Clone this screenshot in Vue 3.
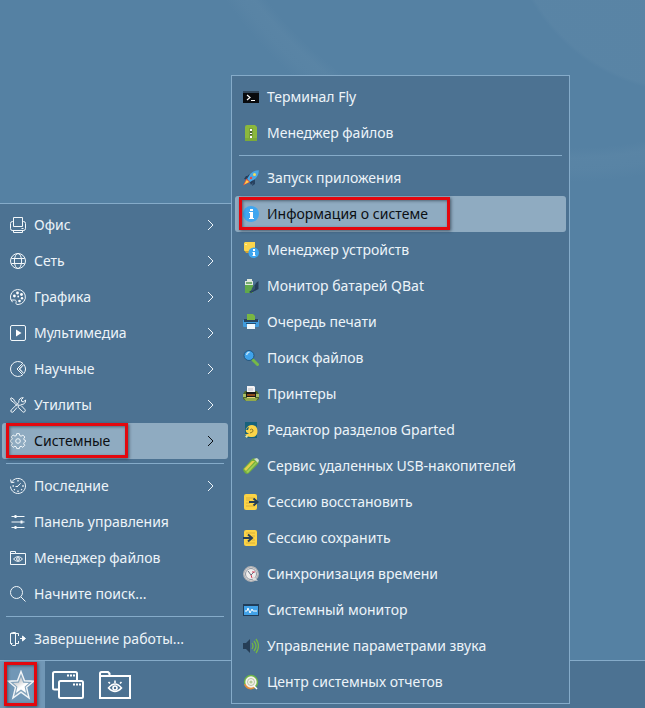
<script setup>
import { ref } from 'vue'

const activeCategory = ref('system')
const activeApp = ref('info')

const categoryGroups = [
  [
    { id: 'office', label: 'Офис', sub: true },
    { id: 'network', label: 'Сеть', sub: true },
    { id: 'graphics', label: 'Графика', sub: true },
    { id: 'media', label: 'Мультимедиа', sub: true },
    { id: 'science', label: 'Научные', sub: true },
    { id: 'utils', label: 'Утилиты', sub: true },
    { id: 'system', label: 'Системные', sub: true, marked: true }
  ],
  [
    { id: 'recent', label: 'Последние', sub: true },
    { id: 'control', label: 'Панель управления' },
    { id: 'folder', label: 'Менеджер файлов' },
    { id: 'search', label: 'Начните поиск...' }
  ],
  [{ id: 'exit', label: 'Завершение работы...' }]
]

const appGroups = [
  [
    { id: 'terminal', label: 'Терминал Fly' },
    { id: 'files', label: 'Менеджер файлов' }
  ],
  [
    { id: 'rocket', label: 'Запуск приложения' },
    { id: 'info', label: 'Информация о системе', marked: true },
    { id: 'devices', label: 'Менеджер устройств' },
    { id: 'battery', label: 'Монитор батарей QBat' },
    { id: 'queue', label: 'Очередь печати' },
    { id: 'find', label: 'Поиск файлов' },
    { id: 'printers', label: 'Принтеры' },
    { id: 'gparted', label: 'Редактор разделов Gparted' },
    { id: 'usb', label: 'Сервис удаленных USB-накопителей' },
    { id: 'restore', label: 'Сессию восстановить' },
    { id: 'save', label: 'Сессию сохранить' },
    { id: 'time', label: 'Синхронизация времени' },
    { id: 'monitor', label: 'Системный монитор' },
    { id: 'sound', label: 'Управление параметрами звука' },
    { id: 'reports', label: 'Центр системных отчетов' }
  ]
]

// line icons, 16x16, drawn with a white stroke
const lineIcons = {
  office: '<path d="M3.5 9.500v-9h9v9zM3.5 4.500h-1a2 2 0 0 0-2 2v5a2 2 0 0 0 2 2h1M12.500 4.500h1a2 2 0 0 1 2 2v5a2 2 0 0 1-2 2h-1M3.500 13.500v2h9v-2M2.500 13.500h11M11.500 11.500h2"/>',
  network: '<circle cx="8" cy="8" r="7.5"/><ellipse cx="8" cy="8" rx="3.6" ry="7.5"/><path d="M1.3 5.5h13.4M1.3 10.5h13.4"/>',
  graphics: '<path d="M2.5 13.2A7.5 7.5 0 1 1 8 15.5c-2 0-2.5-1-1.9-2.3.5-1.2-.2-2.2-1.6-2.2-2.3 0-3.3.3-3.8-.5"/><g fill="#fff" stroke="none"><circle cx="4.4" cy="7" r="1.4"/><circle cx="7.5" cy="4" r="1.4"/><circle cx="11.5" cy="5.5" r="1.4"/><circle cx="12" cy="9.2" r="1.2"/><circle cx="9.5" cy="12" r="1.3"/><circle cx="8.2" cy="7.5" r=".9"/></g>',
  media: '<rect x=".5" y=".5" width="15" height="15" rx="1.5"/><path d="M6 4.5v7L11.5 8z" fill="#fff" stroke="none"/>',
  science: '<path d="M12.8 2.2A7.5 7.5 0 1 0 12.8 13.8L7 8zM13.8 3.5a7.3 7.3 0 0 1 0 9L9.3 8zM12 5.5 9.5 8l2.5 2.5"/>',
  utils: '<path d="M1 .8 3.5 2l1 2L8.6 8.1 7.5 9.2 3.4 5 1.5 4 .5 1.5zM9 8.5c.8-.5 1.7-.4 2.3.2l3.5 3.7c1.5 1.5-.8 3.8-2.3 2.3L8.9 11c-.6-.6-.6-1.5 0-2.5zM1.2 13 8.8 5.6c-.4-2.9 1.4-5.2 4.5-4.9l-2 2 .5 1.8 1.7.4 2-2c.4 3.1-1.8 5-4.7 4.5M7 10.5 3.2 14.9c-1.4 1.3-3.2-.6-2-1.9"/>',
  system: '<path d="M6.7.6h2.6l.5 2 1.3.6 1.8-1.1 1.9 1.9-1.1 1.8.6 1.3 1.2.3v1.3l-1.2.6-.6 1.4 1 1.7-1.9 1.9-1.7-1.1-1.3.6-.5 1.8H6.7l-.5-1.8-1.3-.6-1.7 1.1-1.9-1.9 1-1.7-.6-1.4-1.2-.4V7.3l1.2-.5.6-1.3-1-1.6 1.9-1.9 1.7 1.1 1.3-.5z"/><circle cx="8" cy="8" r="2.3"/>',
  recent: '<path d="M1.5 4.2A7.5 7.5 0 1 1 .5 8.5M.6 1.5l.6 3.2 3.2-.5M7 8.8l3.7-3.5M5.5 8.5H8"/><path d="M8 2v1.600M8 12.400V14M2.500 8h1.400M12.200 8h1.600M4 12l.8-.8M12 12l-.8-.8" stroke-width="1.4"/>',
  control: '<path d="M1.500 2.500h13M1.500 8h13M1.500 13.500h13"/><path d="M5.500 1v3M11.500 6.500v3M5.500 12v3" stroke-width="2"/>',
  folder: '<path d="M.5 14.500V1.500h5v2h10v11zM.5 3.500h5"/><path d="M3.500 9q4.500-4.800 9 0-4.500 4.800-9 0z"/><circle cx="8" cy="9" r="1.400"/>',
  search: '<circle cx="6.500" cy="6.500" r="6"/><path d="m11 11 4.500 4.500"/>',
  exit: '<path d="M8.500 5V2.500h-8v10h2M8.500 10v2.500H5.500M.5 2.500l2-1h3v13h-3l-2-2M10 7.500h4"/><path d="M12.500 5v5L15.500 7.500z" fill="#fff"/>'
}

// full-colour application icons, 16x16
const appIcons = {
  terminal: '<path fill="#31465a" d="M0 2h16v4H0z"/><path fill="#080a0d" d="M0 4h16v10H0z"/><path d="m4 6 3 2.5L4 11M8 11.5h4" fill="none" stroke="#fff" stroke-width="1.2"/>',
  files: '<path d="M2 2q0-2 2-2h8l2 2v14H2z" fill="#8bb83d"/><path d="M2 13h12v3H2z" fill="#7caa38"/><path d="M6 3h4v10H6z" fill="#78a038"/><path d="M7 4h2v2H7zM7 8h2v1H7zM7 11h2v2H7z" fill="#fff"/><path d="M7 6h2v2H7zM7 9h2v1H7z" fill="#49602f"/>',
  rocket: '<path d="m3 6 4 0 4 5-3 4-2-5-5-1z" fill="#263c59"/><path d="m10 11 2-2v5l-3 2zM5 5l3-1-1 4-4 1z" fill="#284362"/><path d="M15.8.2Q11 .1 7.2 4L4 9l3 3 5-3q4-4 3.8-8.8z" fill="#4ba6e4"/><path d="m3.5 8.5-3.5 7 7-3.5z" fill="#f1533c"/><path d="m3.7 10-2.5 4.5L6 12z" fill="#ffd447"/><circle cx="11.5" cy="4.5" r="1.5" fill="#f6dc58"/><circle cx="8" cy="8" r="1.2" fill="#ed463c"/>',
  info: '<circle cx="8" cy="8" r="8" fill="#3fa6ef"/><path d="M7 3h3v2H7zM6 6h4v6h1v1H6v-1h1V7H6z" fill="#fff"/>',
  devices: '<path d="M2 0h10v10H3.5L1 8.5V1z" fill="#fbd54c"/><path d="M2 2h2v1H2z" fill="#fff0a0"/><path d="M2 9h5v2H3z" fill="#d5a22f"/><circle cx="10.7" cy="10.7" r="5.3" fill="#3da5ef"/><path d="M10 7h2v2h-2zM9.5 10H12v3h.5v1h-3v-1h.5v-2h-.5z" fill="#fff"/>',
  battery: '<path d="M4 1h5v2h1v12H2V3h2z" fill="#dfe9dd"/><path d="M2 7h8v8H2z" fill="#60a94a"/><path d="M3 4h6v2H3z" fill="#79ad72"/><path d="M15.500 3v8L8 15l-2-1 4-3 3-6z" fill="#263e59"/><path d="M12 6v5l-4 3 1-4z" fill="#34556f"/>',
  queue: '<path d="M4 0h6l2 2v4H4z" fill="#79b743"/><path d="M0 6h16v6q0 1-1 1H1q-1 0-1-1z" fill="#3f9bdd"/><path d="M1 5h14v3H1z" fill="#27445f"/><path d="M4 5h8v1H4z" fill="#79b743"/><path d="M4 10h8v5H4z" fill="#edf6fb"/><path d="M3 9h10v1H3z" fill="#1f4f77"/>',
  find: '<path d="m9.5 9.5 5 5" stroke="#76b947" stroke-width="3" fill="none" stroke-linecap="round"/><circle cx="6" cy="5.5" r="5" fill="#3fa3eb" stroke="#24577f"/><path d="M3.5 5q.5-2.500 3-3" stroke="#c2e6fc" stroke-width="1.4" fill="none"/>',
  printers: '<path d="M2 5h12l2 3v5l-3 2H3l-3-2V8z" fill="#50682c"/><path d="M4 0h7l1 1v6H4z" fill="#f3f2f3"/><path d="M5 2h5v3H5z" fill="#d8d8dd"/><path d="M0 8h3v3H0zM13 8h3v3h-3z" fill="#a8bf67"/><path d="M3 6h10v5H3z" fill="#17191a"/><path d="M4 8h8v2H4z" fill="#8d4b1b"/><path d="M4 11h8v1H4z" fill="#e6d477"/><path d="M1 12h14l-2 3H3z" fill="#91a94b"/>',
  gparted: '<path d="M2 0h12v16H2z" fill="#17617c"/><path d="M3 7q2-4 6-4 5 0 5.500 6 0 6-5.500 6-5 .500-7-3 3 .500 4-1Q2 11 3 7z" fill="#fbd449"/><path d="M7 8q2-2 3 0t-3 3" fill="none" stroke="#8e7a24"/><path d="M3 8q1-3 3-3L5 8z" fill="#17617c"/><circle cx="3.500" cy="14.500" r="1.200" fill="#efe6a4"/>',
  usb: '<path d="M0 11 9 1q3-2 5.5 1Q17 4 14 7l-8 8q-2 2-4 0t-2-4z" fill="#73ad3d"/><path d="m1 11 8-8 3 0-9 10z" fill="#e2cf4b"/><path d="m11 1 3-1 2 2-1 3z" fill="#d2dfcc"/><path d="m3 14 10-10 1 1L5 15z" fill="#9ece57"/>',
  restore: '<rect x="1" y="0" width="13" height="16" rx="2" fill="#fbd345"/><path d="M3 4h8M3 6h4M3 9h4M3 12h8" stroke="#dbb03a"/><path d="M6 8h8M10.5 4.500 14.500 8l-4 3.500" stroke="#263e56" stroke-width="2" fill="none"/>',
  save: '<rect x="1" y="0" width="13" height="16" rx="2" fill="#fbd345"/><path d="M3 3h9M9 6h3M9 10h3M3 13h9" stroke="#dbb03a"/><path d="M0 8h8M5 4.500 9 8l-4 3.500" stroke="#263e56" stroke-width="2" fill="none"/>',
  time: '<circle cx="8" cy="8" r="7.2" fill="#eee" stroke="#b3b3b5" stroke-width="1.5"/><circle cx="8" cy="8" r="5.5" fill="none" stroke="#8d949d"/><path d="m5 5 3 4 3-3" stroke="#66717f" fill="none"/><path d="M9 6h3M8 9l1 3" stroke="#d23952"/><path d="m10 10 5 5-5-1z" fill="#ddd"/>',
  monitor: '<path d="M0 2h16v12H0z" fill="#203d5a"/><path d="M1 4h14v9H1z" fill="#42a2e8"/><path d="M2 9h2l1-3 2 5 2-4 1 2h4" stroke="#fff" fill="none"/>',
  sound: '<path d="M0 5h3l4-4v14l-4-4H0z" fill="#263e56"/><path d="M9 5q2 3 0 6M11 3q4 5 0 10M13 1q5 7 0 14" stroke="#72b545" stroke-width="1.3" fill="none"/>',
  reports: '<circle cx="8" cy="8" r="7.2" fill="#6db447"/><path d="M1 10a7 7 0 0 0 11 4l-2-3z" fill="#e38c3c"/><circle cx="8" cy="8" r="5.7" fill="#f7f3ec"/><circle cx="8" cy="8" r="3.5" fill="none" stroke="#b5bfa6"/><circle cx="8" cy="8" r="1.6" fill="#b4c995"/><path d="m11 12 3 3" stroke="#fff" stroke-width="1.5"/>'
}
</script>

<template>
  <div class="desktop">
    <main class="wallpaper"></main>

    <div class="menus">
      <nav class="menu start-menu" aria-label="Меню">
        <div v-for="(group, i) in categoryGroups" :key="i" class="group">
          <button
            v-for="item in group"
            :key="item.id"
            class="item"
            :class="{ selected: item.id === activeCategory, marked: item.marked }"
            @click="activeCategory = item.id"
          >
            <svg class="icon line" viewBox="0 0 16 16" v-html="lineIcons[item.id]"></svg>
            <span class="label">{{ item.label }}</span>
            <svg v-if="item.sub" class="chevron" viewBox="0 0 7 12">
              <path d="M1 1 6 6 1 11" />
            </svg>
          </button>
        </div>
      </nav>

      <nav class="menu sub-menu" aria-label="Системные">
        <div v-for="(group, i) in appGroups" :key="i" class="group">
          <button
            v-for="item in group"
            :key="item.id"
            class="item"
            :class="{ selected: item.id === activeApp, marked: item.marked }"
            @click="activeApp = item.id"
          >
            <svg class="icon" viewBox="0 0 16 16" v-html="appIcons[item.id]"></svg>
            <span class="label">{{ item.label }}</span>
          </button>
        </div>
      </nav>
    </div>

    <footer class="taskbar">
      <button class="start-btn" aria-label="Пуск">
        <svg class="star" viewBox="0 0 28 30">
          <defs>
            <linearGradient id="star-fill" x1="0" y1="0" x2="0.6" y2="1">
              <stop offset="0.4" stop-color="#d5d7d9" />
              <stop offset="0.7" stop-color="#fff" />
            </linearGradient>
          </defs>
          <path
            d="m14 1.500 3.500 9.300 9.300.4-7.300 6 2.600 10.800-8.100-5.800L5.900 28l2.600-10.800-7.300-6 9.300-.4z"
            fill="#85a4bc"
            stroke="#f2f5f7"
            stroke-width="1.400"
          />
          <path d="m14 7 2.200 5.700 5.600.4-4.200 3.600 1.500 6.200-5.100-3.500-5.100 3.500 1.500-6.200-4.200-3.600 5.600-.4z" fill="url(#star-fill)" />
        </svg>
      </button>
      <button class="task-btn" aria-label="Окна">
        <svg class="task-icon" viewBox="0 0 32 28">
          <path d="M7 18.500H2.500Q1 18.500 1 17V2.500Q1 1 2.500 1h21Q25 1 25 2.500V9" />
          <rect x="7" y="10" width="24" height="17" rx="1.500" />
          <path d="M15 4.500h2M18 4.500h2M21 4.500h2M21 13.500h2M24 13.500h2M27 13.500h2" />
        </svg>
      </button>
      <button class="task-btn" aria-label="Файлы">
        <svg class="task-icon" viewBox="0 0 32 28">
          <path d="M1 5V2.500Q1 1 2.500 1H9l1.500 1.500V5H31v22H1V5h9" />
          <path d="M9.500 17q6.500-8 13 0-6.500 7-13 0z" stroke-width="1.600" />
          <circle cx="16" cy="17" r="2" stroke-width="1.600" />
          <path d="M16 12V9.500M11 12.500 9.500 11M21 12.500l1.500-1.500" stroke-width="1.600" />
        </svg>
      </button>
    </footer>
  </div>
</template>

<style>
body {
  margin: 0;
}
</style>

<style scoped>
.desktop {
  position: relative;
  display: flex;
  flex-direction: column;
  min-height: 100vh;
  overflow: hidden;
  font-family: "Noto Sans", "Open Sans", sans-serif;
  font-size: 14px;
  color: #edf4f9;
}

.wallpaper {
  flex: 1;
  background:
    radial-gradient(circle at calc(100% + 45px) -90px, rgba(120, 155, 180, 0.12) 179px, transparent 183px),
    radial-gradient(circle at calc(100% - 75px) -236px, transparent 384px, rgba(120, 155, 180, 0.13) 394px, rgba(120, 155, 180, 0.1) 406px, transparent 418px),
    #5581a3;
}

.menus {
  position: absolute;
  left: 0;
  bottom: 4px;
  display: flex;
  align-items: flex-end;
}

.menu {
  box-sizing: border-box;
  background: #4c7292;
  border: 1px solid #85abc9;
}

.start-menu {
  min-width: 231px;
  margin-bottom: 44px;
  padding: 3px 3px 3px 2px;
  border-width: 1px 0 0;
}

.sub-menu {
  min-width: 339px;
  padding: 3px;
}

.group + .group {
  position: relative;
  padding-top: 9px;
}

.group + .group::before {
  content: "";
  position: absolute;
  top: 4px;
  left: 4px;
  right: 4px;
  height: 1px;
  background: #85abc9;
}

.item {
  position: relative;
  display: flex;
  align-items: center;
  gap: 8px;
  width: 100%;
  height: 36px;
  padding: 0 14px 0 8px;
  border: none;
  border-radius: 3px;
  background: none;
  font: inherit;
  color: inherit;
  text-align: left;
  white-space: nowrap;
  cursor: pointer;
}

.item.selected {
  background: #8fabc1;
  color: #0b0f13;
}

.label {
  flex: 1;
  padding-bottom: 2px;
}

.icon {
  flex: none;
  width: 16px;
  height: 16px;
}

.line {
  fill: none;
  stroke: #f3f8fb;
  stroke-width: 1;
  overflow: visible;
}

.chevron {
  width: 7px;
  height: 12px;
  fill: none;
  stroke: currentColor;
}

.marked::after,
.start-btn::after {
  content: "";
  position: absolute;
  box-sizing: border-box;
  border: 3px solid #e3070e;
  box-shadow: 1px 1px 3px rgba(20, 30, 40, 0.6), inset 1px 1px 3px rgba(20, 30, 40, 0.5);
}

.marked::after {
  top: 0;
  bottom: 1px;
  left: 4px;
  width: 122px;
}

.sub-menu .marked::after {
  top: 1px;
  bottom: 2px;
  width: 211px;
}

.taskbar {
  display: flex;
  align-items: center;
  height: 47px;
  background: #4c7292;
  border-top: 1px solid #85abc9;
}

.start-btn {
  position: relative;
  display: flex;
  align-items: center;
  width: 45px;
  height: 100%;
  padding: 0 7px;
  border: none;
  background: #7197b6;
  cursor: pointer;
}

.start-btn::after {
  top: 1px;
  bottom: 2px;
  left: 4px;
  width: 33px;
}

.star {
  width: 28px;
  height: 30px;
}

.task-btn {
  display: flex;
  margin-left: 7px;
  margin-right: 8px;
  padding: 0;
  border: none;
  background: none;
  cursor: pointer;
}

.task-icon {
  width: 32px;
  height: 28px;
  fill: none;
  stroke: #fff;
  stroke-width: 2;
}
</style>
